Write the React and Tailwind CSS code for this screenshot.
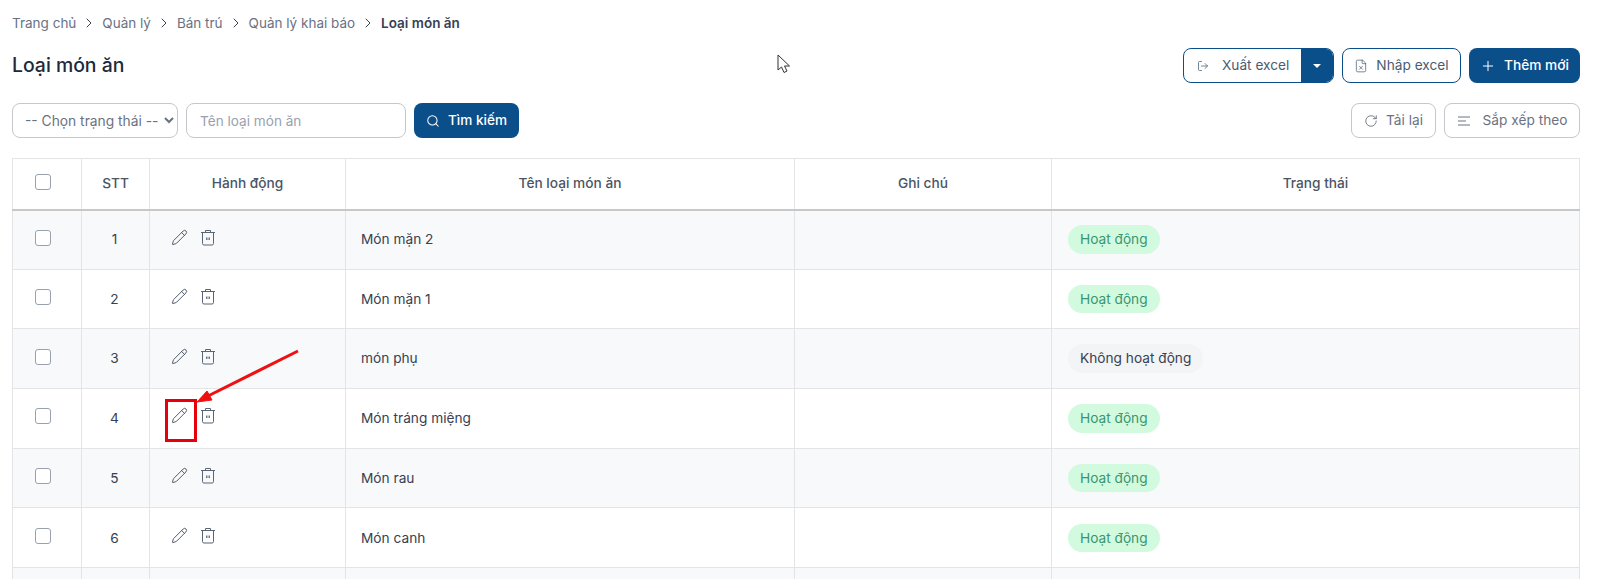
import React from 'react';
import { ChevronRight, Pencil, Plus, Search, RotateCw, LogOut, FileX } from 'lucide-react';

const rows = [
  { stt: 1, name: 'Món mặn 2', active: true },
  { stt: 2, name: 'Món mặn 1', active: true },
  { stt: 3, name: 'món phụ', active: false },
  { stt: 4, name: 'Món tráng miệng', active: true },
  { stt: 5, name: 'Món rau', active: true },
  { stt: 6, name: 'Món canh', active: true },
  { stt: 7, name: '', active: null },
];

function TrashIcon() {
  return (
    <svg width="16" height="17" viewBox="0 0 16 17" fill="none" stroke="#5b6472" strokeWidth="1" className="block">
      <path d="M1 3.5h14" />
      <path d="M5.5 3.5V1.5h5v2" />
      <path d="M2.5 3.5v11a1.5 1.5 0 0 0 1.5 1.5h8a1.5 1.5 0 0 0 1.5-1.5v-11" />
      <path d="M6.8 8.5v2.5M9.2 8.5v2.5" strokeWidth="1.3" />
    </svg>
  );
}

function SortIcon() {
  return (
    <svg width="14" height="12" viewBox="0 0 14 12" fill="none" stroke="#6b7280" strokeWidth="1" className="block">
      <path d="M1 2h12M1 6h8M1 10h12" />
    </svg>
  );
}

function Crumb({ children }) {
  return (
    <>
      <span>{children}</span>
      <ChevronRight className="h-4 w-4 mx-[5px] text-gray-700" strokeWidth={1.5} />
    </>
  );
}

function Checkbox({ className }) {
  return <input type="checkbox" className={`block ml-[22px] appearance-none w-4 h-4 bg-white border border-gray-400 rounded-[3px] ${className}`} />;
}

export default function App() {
  return (
    <div className="relative h-[579px] overflow-hidden bg-white pl-3 pr-5 font-['Inter',sans-serif] text-[#374151]">
      <div className="flex items-center h-4 mt-[15px] text-[13.5px] text-gray-500">
        <Crumb>Trang chủ</Crumb>
        <Crumb>Quản lý</Crumb>
        <Crumb>Bán trú</Crumb>
        <Crumb>Quản lý khai báo</Crumb>
        <span className="font-semibold text-gray-700">Loại món ăn</span>
      </div>

      <div className="flex items-center justify-between mt-[17px] h-[35px]">
        <h1 className="text-[19.4px] font-medium text-gray-800">Loại món ăn</h1>
        <div className="flex gap-2 text-[13.7px] text-[#4b5b70]">
          <div className="flex h-[35px] w-[151px] rounded-lg border border-[#0b4f8a] overflow-hidden">
            <div className="flex flex-1 items-center gap-[13px] pl-[13px]">
              <LogOut className="h-3 w-3" strokeWidth={1.5} />
              Xuất excel
            </div>
            <div className="flex w-8 items-center justify-center bg-[#0b4f8a]">
              <span className="border-x-4 border-t-4 border-x-transparent border-t-white"></span>
            </div>
          </div>
          <button className="flex h-[35px] w-[119px] items-center justify-center gap-2 rounded-lg border border-[#0b4f8a]">
            <FileX className="h-3.5 w-3.5" strokeWidth={1.25} />
            Nhập excel
          </button>
          <button className="flex h-[35px] w-[111px] items-center justify-center gap-2 rounded-lg bg-[#0b4f8a] font-medium text-white">
            <Plus className="h-4 w-4" strokeWidth={1.5} />
            Thêm mới
          </button>
        </div>
      </div>

      <div className="flex items-center justify-between mt-[20px] h-[35px] text-[13.6px]">
        <div className="flex gap-2">
          <select className="h-[35px] w-[166px] rounded-lg border border-[#c4c7cc] bg-white pl-2 text-[13.8px] text-gray-500 outline-none">
            <option>-- Chọn trạng thái --</option>
          </select>
          <input
            placeholder="Tên loại món ăn"
            className="h-[35px] w-[220px] rounded-lg border border-[#c4c7cc] px-[13px] outline-none placeholder:text-gray-400"
          />
          <button className="flex h-[35px] w-[105px] items-center justify-center gap-2 rounded-lg bg-[#0b4f8a] font-medium text-white">
            <Search className="h-3.5 w-3.5" strokeWidth={1.75} />
            Tìm kiếm
          </button>
        </div>
        <div className="flex gap-2 text-[13.7px] text-gray-500">
          <button className="flex h-[35px] w-[85px] items-center justify-center gap-2 rounded-lg border border-[#c4c7cc]">
            <RotateCw className="h-3.5 w-3.5 text-gray-600" strokeWidth={1.25} />
            Tải lại
          </button>
          <button className="flex h-[35px] w-[136px] items-center justify-center gap-3 rounded-lg border border-[#c4c7cc]">
            <SortIcon />
            Sắp xếp theo
          </button>
        </div>
      </div>

      <table className="mt-[20px] w-full table-fixed border-collapse text-[13.7px]">
        <colgroup>
          <col className="w-[69px]" />
          <col className="w-[68px]" />
          <col className="w-[196px]" />
          <col className="w-[449px]" />
          <col className="w-[257px]" />
          <col />
        </colgroup>
        <thead>
          <tr className="h-[51px] font-medium text-gray-600">
            <th className="border border-[#e4e4e7] border-b-2 border-b-[#c8c8c8] font-medium"><Checkbox className="mb-[3px]" /></th>
            <th className="border border-[#e4e4e7] border-b-2 border-b-[#c8c8c8] font-medium">STT</th>
            <th className="border border-[#e4e4e7] border-b-2 border-b-[#c8c8c8] font-medium">Hành động</th>
            <th className="border border-[#e4e4e7] border-b-2 border-b-[#c8c8c8] font-medium">Tên loại món ăn</th>
            <th className="border border-[#e4e4e7] border-b-2 border-b-[#c8c8c8] font-medium">Ghi chú</th>
            <th className="border border-[#e4e4e7] border-b-2 border-b-[#c8c8c8] font-medium">Trạng thái</th>
          </tr>
        </thead>
        <tbody>
          {rows.map((r) => (
            <tr key={r.stt} className="h-[59.7px] odd:bg-[#f8f9fb]">
              <td className="border border-[#e4e4e7]">{r.name && <Checkbox className="mb-1" />}</td>
              <td className="border border-[#e4e4e7] pr-0.5 text-center">{r.name && r.stt}</td>
              <td className="border border-[#e4e4e7] pl-[21px]">
                {r.name && (
                  <div className="flex items-center gap-[12px] mb-[5px]">
                    <Pencil className="h-[17px] w-[17px] text-gray-600" strokeWidth={1.35} />
                    <TrashIcon />
                  </div>
                )}
              </td>
              <td className="border border-[#e4e4e7] pl-[15px]">{r.name}</td>
              <td className="border border-[#e4e4e7]"></td>
              <td className="border border-[#e4e4e7] pl-4">
                {r.active === true && (
                  <span className="inline-block rounded-full bg-[#d1fadf] px-3 py-1 text-[#3a9670]">Hoạt động</span>
                )}
                {r.active === false && (
                  <span className="inline-block rounded-full bg-[#f3f4f6] px-3 py-1">Không hoạt động</span>
                )}
              </td>
            </tr>
          ))}
        </tbody>
      </table>

      {/* red annotation drawn over the table */}
      <div className="absolute left-[165px] top-[399px] h-[43px] w-[32px] border-[3px] border-red-600"></div>
      <svg className="absolute left-[190px] top-[345px]" width="115" height="65" viewBox="0 0 115 65">
        <path d="M108 6L16 52" stroke="#ef1111" strokeWidth="3" />
        <path d="M7 57L22 55L17 46Z" fill="#ef1111" stroke="#ef1111" strokeWidth="1" />
      </svg>

      {/* mouse cursor from the capture */}
      <svg className="absolute left-[777px] top-[54px]" width="16" height="21" viewBox="0 0 16 21" fill="white" stroke="#333" strokeWidth="1">
        <path d="M1 1V16L4.5 13L7 18.5L10 17L7.5 12H12.5Z" />
      </svg>
    </div>
  );
}
